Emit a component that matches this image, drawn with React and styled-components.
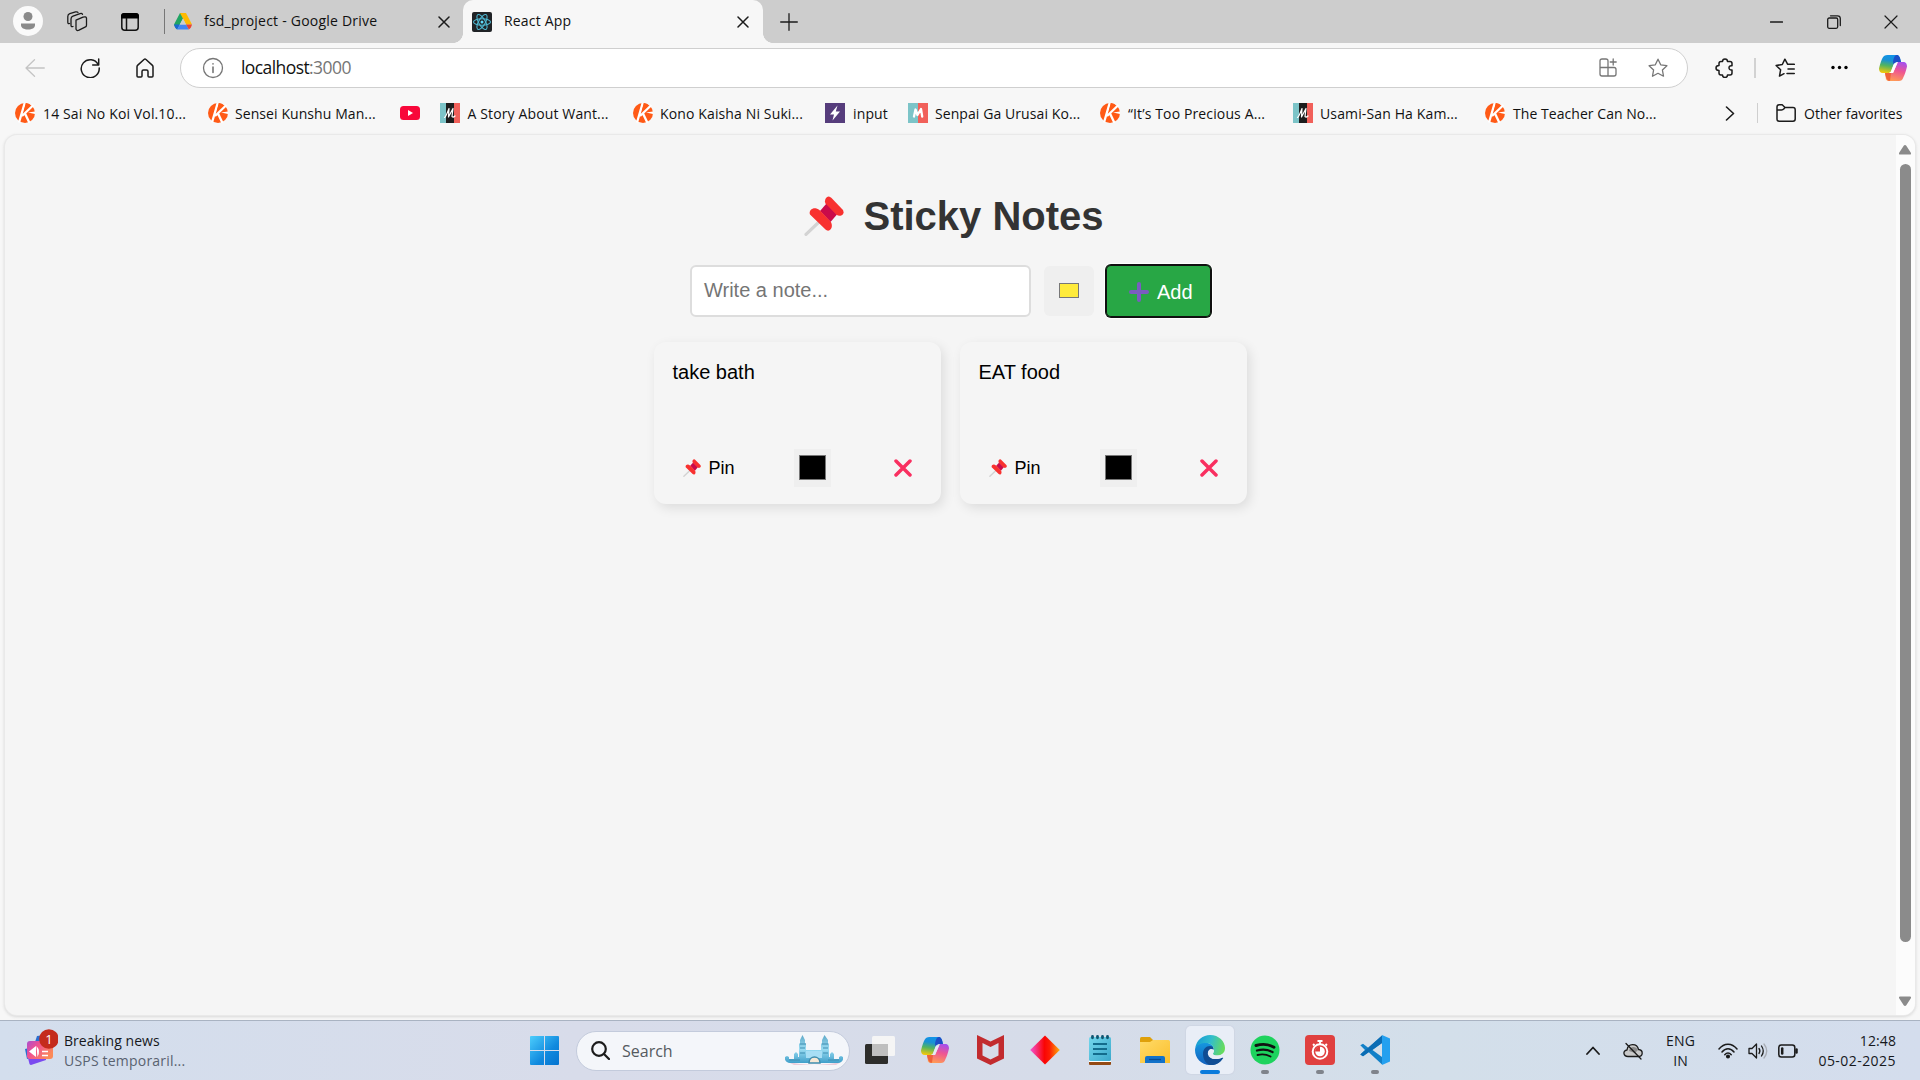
import React from "react";
import styled, { createGlobalStyle } from "styled-components";

const Global = createGlobalStyle`
  * { box-sizing: border-box; }
  body { margin: 0; background: #f7f7f7; overflow: hidden; }
  svg { display: block; flex: none; }
`;

const ui = `"Open Sans", "Noto Sans", sans-serif`;
const arial = `"Liberation Sans", Arial, sans-serif`;

const Screen = styled.div`
  width: 1920px;
  height: 1080px;
  display: flex;
  flex-direction: column;
  background: #f7f7f7;
  font-family: ${ui};
  color: #111;
  overflow: hidden;
`;

/* Fixed-width cell that starts its content at the left edge */
const Cell = styled.div`
  width: ${(p) => p.$w}px;
  flex: none;
  display: flex;
  align-items: center;
`;

const Label = styled.span`
  font-size: ${(p) => p.$size || 14}px;
  letter-spacing: ${(p) => p.$track || 0}px;
  line-height: 20px;
  white-space: nowrap;
`;

const Grow = styled.div`
  flex: 1;
`;

const Rule = styled.div`
  width: ${(p) => p.$w || 1}px;
  height: ${(p) => p.$h}px;
  background: ${(p) => p.$c};
  flex: none;
`;

/* ---------- tab strip ---------- */
const TabStrip = styled.div`
  height: 43px;
  flex: none;
  display: flex;
  background: #cdcdcd;
`;

const StripStart = styled.div`
  width: 164px;
  padding-left: 13px;
  display: flex;
  align-items: center;
`;

const Avatar = styled.div`
  width: 30px;
  height: 30px;
  margin: 0 24px 1px 0;
  border-radius: 50%;
  background: #fafafa;
  display: flex;
  align-items: center;
  justify-content: center;
`;

const Tab = styled.div`
  width: ${(p) => p.$w}px;
  display: flex;
  align-items: center;
  padding: 0 ${(p) => (p.$active ? 14 : 13)}px 0 9px;
  position: relative;
  ${(p) =>
    p.$active &&
    `
    background: #f7f7f7;
    border-radius: 10px 10px 0 0;
    &::before, &::after {
      content: "";
      position: absolute;
      bottom: 0;
      width: 10px;
      height: 10px;
    }
    &::before { left: -10px; background: radial-gradient(circle at 0 0, #cdcdcd 9.6px, #f7f7f7 10.2px); }
    &::after { right: -10px; background: radial-gradient(circle at 100% 0, #cdcdcd 9.6px, #f7f7f7 10.2px); }
  `}
`;

const TabTitle = styled(Label)`
  flex: 1;
  margin: 0 0 2px 12px;
`;

const WindowButtons = styled.div`
  display: flex;
  gap: 43.5px;
  align-items: center;
  padding-right: 22px;
`;

/* ---------- toolbar ---------- */
const Toolbar = styled.div`
  height: 49px;
  flex: none;
  display: flex;
  align-items: center;
  padding-left: 25px;
`;

const Address = styled.div`
  width: 1508px;
  height: 40px;
  border: 1px solid #cfcfcf;
  border-radius: 20px;
  background: #fff;
  display: flex;
  align-items: center;
  padding: 0 19px 0 21px;
`;

const Url = styled.span`
  margin: 0 0 1px 17px;
  font-size: 17.5px;
  letter-spacing: -0.58px;
  line-height: 24px;
  flex: 1;
  span { color: #767676; }
`;

const ToolbarEnd = styled.div`
  flex: 1;
  display: flex;
  align-items: center;
  padding-left: 27px;
`;

/* ---------- favourites ---------- */
const Favorites = styled.div`
  height: 43px;
  flex: none;
  display: flex;
  align-items: center;
  padding: 0 0 1px 15px;
`;

const Favorite = styled(Cell)`
  gap: ${(p) => p.$gap || 8}px;
  ${Label} { padding-top: ${(p) => (p.$low ? 2 : 1)}px; }
`;

const MangaTile = styled.div`
  width: 20px;
  height: 20px;
  flex: none;
  background: ${(p) =>
    p.$dark
      ? "linear-gradient(90deg,#7cc4c8 0 6px,#1d1d1d 6px 14px,#f1605a 14px)"
      : "linear-gradient(90deg,#7cc4c8 0 10px,#f1605a 10px)"};
`;

/* ---------- page ---------- */
const Page = styled.main`
  height: 880px;
  flex: none;
  margin: 0 5px;
  display: flex;
  background: #f5f5f5;
  border-radius: 12px;
  overflow: hidden;
  box-shadow: 0 0 0 1px #e9e9e9, 0 1px 3px 1px #d8d8d8;
`;

const Content = styled.div`
  flex: 1;
  display: flex;
  flex-direction: column;
  align-items: center;
  font-family: ${arial};
`;

const Heading = styled.h1`
  margin: 57px 0 0;
  width: 303px;
  padding-left: 5px;
  display: flex;
  align-items: center;
  gap: 19.5px;
  font-size: 40px;
  line-height: 48px;
  color: #333;
  white-space: nowrap;
`;

const Form = styled.div`
  margin-top: 25px;
  display: flex;
  align-items: center;
  gap: 12.5px;
`;

const NoteInput = styled.div`
  width: 341px;
  height: 52px;
  border: 2px solid #ddd;
  border-radius: 6px;
  background: #fff;
  padding: 0 12px 1px;
  display: flex;
  align-items: center;
  font-size: 20px;
  color: #757575;
`;

const ColorField = styled.div`
  width: ${(p) => p.$w}px;
  height: ${(p) => p.$h}px;
  border-radius: ${(p) => p.$r || 0}px;
  background: #efefef;
  display: flex;
  align-items: center;
  justify-content: center;
`;

const Swatch = styled.div`
  width: ${(p) => p.$w}px;
  height: ${(p) => p.$h}px;
  margin-bottom: 1px;
  border: 1px solid #777;
  background: ${(p) => p.$c};
`;

const AddButton = styled.button`
  width: 105px;
  height: 52px;
  padding: 2px 0 0 23px;
  border: 0;
  border-radius: 5px;
  background: #28a745;
  box-shadow: 0 0 0 1px #101010, inset 0 0 0 1px #101010, 0 0 0 2px #fff;
  display: flex;
  align-items: center;
  gap: 8px;
  color: #fff;
  font: 20px ${arial};
`;

const Notes = styled.div`
  margin-top: 25px;
  display: flex;
  gap: 19px;
`;

const Note = styled.article`
  width: 287px;
  height: 162px;
  padding: 18px 19px 17px 18.5px;
  border-radius: 12px;
  background: #f5f5f5;
  box-shadow: 3px 4px 12px rgba(0, 0, 0, 0.1);
  display: flex;
  flex-direction: column;
  justify-content: space-between;
  font-size: 20px;
  line-height: 24px;
  color: #000;
`;

const NoteActions = styled.div`
  display: flex;
  align-items: center;
  justify-content: space-between;
  padding: 0 10px;
`;

const PinButton = styled.div`
  width: 48px;
  display: flex;
  align-items: center;
  gap: 8px;
  font-size: 18px;
  line-height: 20px;
`;

const ScrollBar = styled.div`
  width: 19px;
  background: #fcfcfc;
  display: flex;
  flex-direction: column;
  align-items: center;
  padding: 10px 1px 9px 0;
`;

const Thumb = styled.div`
  width: 11px;
  height: 778px;
  margin-top: 9px;
  border-radius: 6px;
  background: #8b8b8b;
`;

/* ---------- taskbar ---------- */
const Taskbar = styled.footer`
  height: 60px;
  margin-top: auto;
  flex: none;
  display: flex;
  align-items: center;
  border-top: 1px solid #a9b3c2;
  background: linear-gradient(90deg, #d3deed 0, #d8dcea 30%, #d6dce9 55%, #d3dfea 75%, #d4dded 100%);
`;

const Widget = styled.div`
  width: 530px;
  padding-left: 25px;
  display: flex;
  align-items: center;
  gap: 6px;
  > svg { margin-bottom: 6px; }
`;

const Lines = styled.div`
  display: flex;
  flex-direction: column;
  align-items: ${(p) => p.$align || "flex-start"};
  color: #16181c;
  em { display: flex; font-style: normal; color: #596270; }
`;

const SearchBox = styled.div`
  width: 274px;
  height: 40px;
  margin: 0 1px 0 17px;
  padding: 0 6px 0 14px;
  border: 1px solid #c3cbdc;
  border-radius: 20px;
  background: #f4f6fa;
  display: flex;
  align-items: center;
  color: #555a60;
`;

const SearchText = styled(Label)`
  flex: 1;
  margin-left: 12px;
`;

const Apps = styled.div`
  display: flex;
  margin: 0 0 1px 5px;
  gap: 7px;
`;

const AppTile = styled.div`
  width: 48px;
  height: 48px;
  padding-top: 9px;
  border-radius: 5px;
  display: flex;
  flex-direction: column;
  align-items: center;
  justify-content: space-between;
  ${(p) => p.$active && "background: #e9eef7; box-shadow: 0 0 1px 1px #cfd6e4;"}
`;

const AppIcon = styled.div`
  height: 30px;
  display: flex;
  align-items: center;
`;

const Indicator = styled.div`
  width: ${(p) => (p.$active ? 20 : 8)}px;
  height: 4px;
  border-radius: 2px;
  background: ${(p) => (p.$show ? (p.$active ? "#0a7bdc" : "#7f838b") : "transparent")};
`;

const Tray = styled.div`
  display: flex;
  align-items: center;
  padding-right: 24px;
`;

/* ---------- drawings ---------- */
const Svg = ({ w, h, children, sw = 1.3, color = "#1b1b1b" }) => (
  <svg width={w} height={h} viewBox={`0 0 ${w} ${h}`} fill="none" stroke={color} strokeWidth={sw} strokeLinecap="round" strokeLinejoin="round">
    {children}
  </svg>
);

const Cross = ({ s = 12, sw = 1.5 }) => (
  <Svg w={s} h={s} sw={sw}><path d={`M1 1L${s - 1} ${s - 1}M${s - 1} 1L1 ${s - 1}`} /></Svg>
);

const PushPin = ({ size }) => (
  <svg width={size} height={size} viewBox="0 0 40 40" strokeLinecap="round" strokeLinejoin="round">
    <path d="M2 38.300L16 25" stroke="#d3d3d3" strokeWidth="3.200" />
    <path d="M16 15L22.500 7.500L33 18.500L26.500 26Z" fill="#ca0b4a" />
    <path d="M6 18.500C4.500 14.500 8.500 11.500 12.500 12.500C14 13 15.500 14 16.500 15L26.500 25.500C28.500 28 28.500 32.500 25.500 34.300C24 35 22.500 34.500 21.500 33.500Z" fill="#f8312f" />
    <path d="M21.500 7.500C20 4.500 22 .5 24.500 .5C26 .5 27 1.500 28 2.500L38.500 13.500C40.500 16 39.500 19 36.500 19.700C35 19.900 33.500 19.500 32.500 18.700Z" fill="#f8312f" />
  </svg>
);

const Plus = () => (
  <Svg w={20} h={20} sw={4} color="#7a5cc0"><path d="M10 2v16M2 10h16" /></Svg>
);

const KIcon = () => (
  <svg width="20" height="20" viewBox="0 0 20 20">
    <circle cx="10" cy="10" r="10" fill="#ff5a16" />
    <path d="M9.700 0L4 19.500M18.500 2L7 13M10 10.500L14.500 20" stroke="#fff" strokeWidth="2.300" fill="none" />
    <path d="M11 0L9 7.500L15 1.500Z" fill="#ff5a16" />
    <path d="M13 9.500L20 8.500V11Z" fill="#fff" />
  </svg>
);

const MangaIcon = ({ dark }) => (
  <MangaTile $dark={dark}>
    <Svg w={20} h={20} color="#fff" sw={dark ? 1.2 : 2.3}>
      {dark ? <path d="M4.500 14.500C6 14 8 8 9 5.500L8.500 14L13 5.500L12 13.500C13 14.500 14 14 15 13" /> : <path d="M6 13.500L7.500 6.500L9.500 12L13 6L14.200 13.500" />}
    </Svg>
  </MangaTile>
);

const YouTube = () => (
  <svg width="20" height="14" viewBox="0 0 20 14"><rect width="20" height="14" rx="3.500" fill="#f8073a" /><path d="M8 4v6l5-3z" fill="#fff" /></svg>
);

const Bolt = () => (
  <svg width="20" height="20"><rect width="20" height="20" fill="#563d7c" /><path d="M12.500 2.500L5 11.500h4L7.500 17.500L15 8.500h-4.200z" fill="#fff" /></svg>
);

const Drive = () => (
  <svg width="18" height="17" viewBox="0 0 18 17">
    <path d="M6 0h6L9 5.500L3.100 16.500C1.500 15 0 12 0 11.500z" fill="#1fa463" />
    <path d="M6 0h6l6 11.500h-6z" fill="#ffba00" />
    <path d="M0 11.500h5.800L3.100 16.500C1.500 15.500.5 13.500 0 11.500z" fill="#1967d2" />
    <path d="M5.800 11.500h6.400l2.700 5H3.100z" fill="#4285f4" />
    <path d="M12 11.500h6c-.5 2-1.500 4-3.100 5z" fill="#ea4335" />
    <path d="M9 5.500l3 6H5.800z" fill="#cdcdcd" />
  </svg>
);

const ReactIcon = () => (
  <svg width="20" height="20" viewBox="0 0 20 20" fill="none" stroke="#4fb9d3" strokeWidth="1.100">
    <rect width="20" height="20" rx="2" fill="#202326" stroke="none" />
    {[0, 60, 120].map((a) => <ellipse key={a} cx="10" cy="10" rx="8.500" ry="3.300" transform={`rotate(${a} 10 10)`} />)}
    <circle cx="10" cy="10" r="1.500" fill="#61dafb" stroke="none" />
  </svg>
);

const Copilot = ({ id, bg = "#fff" }) => (
  <svg width="28" height="26" viewBox="0 0 28 26">
    <defs>
      <linearGradient id={`${id}a`} x1=".5" y1="0" x2=".3" y2="1">
        <stop offset="0" stopColor="#1193e8" /><stop offset=".3" stopColor="#1991d4" /><stop offset=".6" stopColor="#52b45f" /><stop offset="1" stopColor="#f4c80a" />
      </linearGradient>
      <linearGradient id={`${id}b`} x1=".7" y1="0" x2=".4" y2="1">
        <stop offset="0" stopColor="#a550ed" /><stop offset=".45" stopColor="#ee5593" /><stop offset="1" stopColor="#ff9b55" />
      </linearGradient>
    </defs>
    <path d="M7 26C7 22 6 20 6 18h8l5-11h5c3 0 4 2 4 4.500-1 4.500-2.500 8.500-3.500 10.500-1 3-2.500 4-4.500 4H10c-1.500 0-2.500-.5-3-2z" fill={`url(#${id}b)`} />
    <path d="M6 18h6l-1 7.800C8 26 7 23 6 18z" fill="#ef6238" />
    <path d="M8.500 0H18c2 0 3 2 4 7h-4c-2 0-3 1-4 4l-2 5c-.6 1.500-1.500 2-3 2H4C1 18 0 16 0 13.500 1 9 2.500 5 3.500 3 4.500 1 6 0 8.500 0z" fill={`url(#${id}a)`} />
    <path d="M14 6.500C15 2 16 0 18 0c2 0 3 2 4 7h-3c-2.500 0-3 .5-4.500 3z" fill="#1c4fc7" />
    <path d="M15 8.500h3L14 18h-4c1.500-.5 2-1 2.500-2.500z" fill={bg} />
  </svg>
);

const McAfee = () => (
  <svg width="27" height="30"><path fillRule="evenodd" d="M0 0l13.500 6.500L27 0v23.500L13.500 30 0 23.500zM5.500 8v12.500l8 4 8-4V8l-8 4z" fill="#c22b2e" /></svg>
);

const Diamond = () => (
  <svg width="30" height="30">
    <defs><linearGradient id="dia"><stop offset="0" stopColor="#f453d5" /><stop offset=".48" stopColor="#fa0505" /><stop offset=".65" stopColor="#fd1b05" /><stop offset="1" stopColor="#ffae0a" /></linearGradient></defs>
    <path d="M15 0.500L29.800 15 15 29.500.2 15z" fill="url(#dia)" />
  </svg>
);

const Notepad = () => (
  <svg width="22" height="30">
    <defs><linearGradient id="np" x2="1" y2="1"><stop stopColor="#74d7ec" /><stop offset="1" stopColor="#3ba8cb" /></linearGradient></defs>
    <rect y="24" width="22" height="6" rx="1" fill="#934a14" /><rect y="24" width="22" height="3" fill="#fff" />
    <rect y="2" width="22" height="24" rx="1.500" fill="url(#np)" />
    <path d="M4 9h14M4 14h14M4 19h14" stroke="#136c8c" strokeWidth="1.800" />
    <path d="M3.500 1.500v1.300M8.500 1.500v1.300M13.500 1.500v1.300M18.500 1.500v1.300" stroke="#0f5671" strokeWidth="2.800" strokeLinecap="round" />
  </svg>
);

const Explorer = () => (
  <svg width="30" height="26">
    <defs><linearGradient id="fo" x2="1" y2="1"><stop stopColor="#ffda68" /><stop offset="1" stopColor="#fbc02d" /></linearGradient></defs>
    <path d="M0 1.500Q0 0 1.500 0H10l3 3v5H0z" fill="#dfa00a" />
    <path d="M0 5h10l3-2h15.500q1.500 0 1.500 1.500V26H0z" fill="url(#fo)" />
    <path d="M5 26v-5q0-2 2-2h16q2 0 2 2v5z" fill="#1272c9" /><path d="M9 22.500h12" stroke="#084b91" strokeWidth="1.300" />
  </svg>
);

const Edge = () => (
  <svg width="30" height="30" viewBox="0 0 30 30">
    <defs>
      <linearGradient id="eg" x1="0" y1=".3" x2="1" y2=".5"><stop stopColor="#159bd6" /><stop offset=".5" stopColor="#32bdcc" /><stop offset="1" stopColor="#68dc5a" /></linearGradient>
      <linearGradient id="eb" x2="0" y2="1"><stop stopColor="#1698e0" /><stop offset="1" stopColor="#1260bd" /></linearGradient>
    </defs>
    <path d="M0 15C0 9 7 6 13 8c6 2 6 5 5 7-3-3-7-1-7 4 0 7 8 10 16 5-2 4-7 6-12 6C6 30 0 23 0 15z" fill="url(#eb)" />
    <path d="M8 19c0-5 3-8 7-8 3 0 4 2 3.500 4-2.500-2-6.500 0-5.500 4.500C14 24 20 25.500 27.500 22.500c.7 0 .8.5.5 1C24 29 19 30.500 15 30 11 29 8 24 8 19z" fill="#104d94" />
    <path d="M.2 13C1.500 5 8 0 15 0c9 0 15 6.500 15 13 0 6-5 8-9 7.500-2.500-.3-3.500-1.200-3-2C20.500 14 18 8 11 8 6 8 2 10 .2 13z" fill="url(#eg)" />
    <path d="M13.500 18C13 15 15.500 12.800 18.500 14.500C19.500 16 18.500 17.500 18 18.500C17.800 20 20 20.500 22 20.500C25 20.600 27.500 19.500 29 17.500C28.500 20 28 21.500 27.500 22.500C20 25.500 14 24 13.500 18Z" fill="#e9eef7" />
  </svg>
);

const Spotify = () => (
  <svg width="30" height="30" fill="none" stroke="#111" strokeLinecap="round">
    <circle cx="15" cy="15" r="14.500" fill="#1ed35e" stroke="none" />
    <path d="M6 10.500c6-1.800 13-1.200 18 1.800" strokeWidth="2.900" /><path d="M7 15.500c5-1.500 11-1 15.500 1.600" strokeWidth="2.300" /><path d="M7.500 20c4.500-1.200 9-.7 13 1.500" strokeWidth="1.900" />
  </svg>
);

const Timer = () => (
  <svg width="30" height="30" fill="none" stroke="#fff">
    <rect width="30" height="30" rx="4" fill="#e0403f" stroke="none" />
    <circle cx="15" cy="16.500" r="7.300" strokeWidth="2" /><circle cx="15" cy="16.500" r="4.800" fill="#fff" stroke="none" />
    <path d="M15 16.500V11.500A5 5 0 0 0 10 16.500z" fill="#e0403f" stroke="none" />
    <path d="M12.500 6h5M15 6v3M20.500 9l1.500 1.500M9.500 9L8 10.500" strokeWidth="1.800" />
  </svg>
);

const Code = () => (
  <svg width="30" height="30">
    <path d="M22 0.500L8.500 13 3 8.800.3 10.300 5 15 .3 19.500 3 21.200 8.500 17 22 29.500V22L12.500 15 22 8z" fill="#1180c8" />
    <path d="M.3 19.500L3 21.200 22 8V.5z" fill="#0a6cb4" />
    <path d="M22 0l8 3.500v23L22 30z" fill="#24a0ef" />
  </svg>
);

const Windows = () => (
  <svg width="29" height="29">
    <defs><linearGradient id="wi" x2="1" y2="1"><stop stopColor="#4ccdfc" /><stop offset=".6" stopColor="#1089de" /><stop offset="1" stopColor="#0573cf" /></linearGradient></defs>
    <path d="M1 0h13v14H0V1q0-1 1-1zM15 0h13q1 0 1 1v13H15zM0 15h14v14H1q-1 0-1-1zM15 15h14v13q0 1-1 1H15z" fill="url(#wi)" />
  </svg>
);

const TaskView = () => (
  <svg width="30" height="28">
    <rect y="8" width="23" height="20" rx="1.500" fill="#2d2d2b" /><rect x="7" width="23" height="20" rx="1.500" fill="#f5f5f5" /><rect x="7" y="8" width="16" height="12" fill="#bfbfbf" />
  </svg>
);

const Castle = () => (
  <svg width="58" height="31" viewBox="0 0 58 31">
    <defs><linearGradient id="ca" x2="0" y2="1"><stop stopColor="#5fa9c8" /><stop offset=".5" stopColor="#9adcf2" /><stop offset="1" stopColor="#3f9fca" /></linearGradient></defs>
    <path d="M3 27q26 6 53 0l-5 3H9z" fill="#e9cdda" />
    <path d="M0 22l2-1 2 1 0 2h5v-5l2-2 2 2v3h1V9l1-1V5l2.500-5 2.500 5v3l1 1v6h15V9l1-1V5l2.500-5L43 5v3l1 1v13h1v-3l2-2 2 2v5h5v-2l2-1 2 1c1 3-2 6-5 6H5c-3 0-6-3-5-6z" fill="url(#ca)" />
    <path d="M21 16h16v7H21z" fill="#a7def5" />
    <path d="M15 9h6M15 13h5M15 18h5M37 9h6M38 13h5M38 18h5M4 25h11M43 25h11" stroke="#3d8db2" strokeWidth="1" />
    <path d="M24 28c0-8 11-8 11 0z" fill="#f4e8d6" stroke="#3e8cad" strokeWidth="1.500" />
  </svg>
);

const News = () => (
  <svg width="33" height="37" viewBox="0 0 33 37">
    <defs><linearGradient id="ne" x2="1" y2=".6"><stop stopColor="#a94fd0" /><stop offset=".4" stopColor="#f04f92" /><stop offset="1" stopColor="#fb8a58" /></linearGradient></defs>
    <path d="M12 7l8-1v10H9zM0 20l4-1 2 10-4 1z" fill="#2a6fd0" /><path d="M3 29h18v2L6 36q-1 0-1.500-1z" fill="#7a4af0" />
    <rect x="2" y="12" width="26" height="18" rx="3" fill="url(#ne)" />
    <path d="M4 22.500l7-5.500v11zM11.500 17q4.500 5 1 11z" fill="#fff" /><path d="M17 22.500h6M17 26.500h6" stroke="#fff" strokeWidth="1.500" />
    <circle cx="23.900" cy="10" r="9.800" fill="#c42b1c" />
    <text x="24" y="14.600" textAnchor="middle" fontFamily="Open Sans, sans-serif" fontSize="13" fill="#fff">1</text>
  </svg>
);

const starPath = "M10 1.200l2.700 5.600 6.200.9-4.500 4.300 1.100 6.200L10 15.300l-5.500 2.900 1.100-6.200L1.100 7.700l6.200-.9z";

const favorites = [
  { icon: <KIcon />, text: "14 Sai No Koi Vol.10...", w: 193, gap: 8, low: true },
  { icon: <KIcon />, text: "Sensei Kunshu Man...", w: 192, gap: 7, low: true, track: 0.08 },
  { icon: <YouTube />, w: 40 },
  { icon: <MangaIcon dark />, text: "A Story About Want...", w: 193, gap: 7.500 },
  { icon: <KIcon />, text: "Kono Kaisha Ni Suki...", w: 192, gap: 7, low: true },
  { icon: <Bolt />, text: "input", w: 83, gap: 8, low: true },
  { icon: <MangaIcon />, text: "Senpai Ga Urusai Ko...", w: 192, gap: 7, track: 0.08 },
  { icon: <KIcon />, text: "“It’s Too Precious A...", w: 193, gap: 8, low: true },
  { icon: <MangaIcon dark />, text: "Usami-San Ha Kam...", w: 192, gap: 7 },
  { icon: <KIcon />, text: "The Teacher Can No...", w: 240, gap: 8, track: 0.05 },
];

const apps = [
  { icon: <TaskView /> },
  { icon: <Copilot id="t" bg="#e6eaf3" /> },
  { icon: <McAfee /> },
  { icon: <Diamond /> },
  { icon: <Notepad /> },
  { icon: <Explorer /> },
  { icon: <Edge />, open: true, active: true },
  { icon: <Spotify />, open: true },
  { icon: <Timer />, open: true },
  { icon: <Code />, open: true },
];

function BrowserTabs() {
  return (
    <TabStrip>
      <StripStart>
        <Avatar><svg width="14" height="18"><circle cx="7" cy="4.500" r="4.500" fill="#8a8a8a" /><path d="M0 11.500h14v1.500c0 3-3 4.500-7 4.500s-7-1.500-7-4.500z" fill="#8a8a8a" /></svg></Avatar>
        <Cell $w={54}>
          <Svg w={21} h={21}>
            <path d="M9 9.200l7-3 q3-1 3.500 1v7q0 1.500-1.500 2l-6 3q-2.500 1-3-1v-7q0-1.500 0-2zM6 15.500c-1.500.5-2 0-2-1.500V8q0-2 2-2.800l7-2.600q2-.6 2.500.8M2.500 12.500C1 13 .8 12 .8 11V5.500q0-2 2-2.800L8.500.9q2-.4 2.500.6" />
          </Svg>
        </Cell>
        <svg width="18" height="18"><rect x=".8" y=".8" width="16.400" height="16.400" rx="3" fill="none" stroke="#111" strokeWidth="1.500" /><path d="M0 5.500V3q0-3 3-3h12q3 0 3 3v2.500z" fill="#000" /><path d="M5.500 5v12.500" stroke="#111" strokeWidth="1.500" /></svg>
      </StripStart>
      <Cell $w={1}><Rule $h={25} $c="#777" /></Cell>
      <Tab $w={298}>
        <Drive />
        <TabTitle $track={0.22}>fsd_project - Google Drive</TabTitle>
        <Cross />
      </Tab>
      <Tab $w={300} $active>
        <ReactIcon />
        <TabTitle $track={0.18}>React App</TabTitle>
        <Cross />
      </Tab>
      <Cell $w={60}><Grow /><Svg w={18} h={18}><path d="M9 .7v16.600M.7 9h16.600" /></Svg><Cell $w={25} /></Cell>
      <Grow />
      <WindowButtons>
        <Svg w={13} h={14}><path d="M.5 7h12" /></Svg>
        <Svg w={14} h={14}><rect x=".7" y="3" width="10" height="10.300" rx="1.500" /><path d="M3.500.8h7q2.800 0 2.800 2.800v7" /></Svg>
        <Cross s={14} sw={1.2} />
      </WindowButtons>
    </TabStrip>
  );
}

function NavigationBar() {
  return (
    <Toolbar>
      <Cell $w={55}><Svg w={20} h={18} color="#c4c4c4"><path d="M19.300 9H1M9.500.8L1 9l8.500 8.200" /></Svg></Cell>
      <Cell $w={56}><Svg w={20} h={20} sw={1.5}><path d="M18.200 6.500A9 9 0 1 0 19.200 10M18.700 1v6h-6" /></Svg></Cell>
      <Cell $w={44}><Svg w={18} h={20} sw={1.5}><path d="M1 8.800q0-1 .8-1.700L8 1.500q1-.8 2 0l6.200 5.600q.8.700.8 1.700V18q0 1-1 1h-3q-1 0-1-1v-4.500q0-1.500-1.500-1.500h-3Q6 12 6 13.500V18q0 1-1 1H2q-1 0-1-1z" /></Svg></Cell>
      <Address>
        <Svg w={22} h={22} color="#767676"><circle cx="11" cy="11" r="9.500" /><path d="M11 10v5.500M11 6.700v.3" strokeWidth="1.600" /></Svg>
        <Url>localhost<span>:3000</span></Url>
        <Cell $w={49}><Svg w={18} h={19} color="#767676"><path d="M9 9.500V3q0-2-2-2H3Q1 1 1 3v13q0 2 2 2h12q2 0 2-2v-4.500q0-2-2-2zM1 9.500h8V18M14.200 1v6M11.200 4h6" /></Svg></Cell>
        <Svg w={20} h={20} color="#767676"><path d={starPath} /></Svg>
      </Address>
      <ToolbarEnd>
        <Cell $w={39}><Svg w={19} h={20} sw={1.5}><path d="M4 5.500q0-2 2-2h1.500c0-3.500 5-3.500 5 0H15q2 0 2 2v2.300c-4-1-4 5 0 4.200V15q0 2-2 2h-2.500c0 3.300-5 3.300-5 0H6q-2 0-2-2v-2.500c-4 0-4-5 0-5z" /></Svg></Cell>
        <Cell $w={21}><Rule $w={2} $h={20} $c="#d2d2d2" /></Cell>
        <Cell $w={56}><Svg w={20} h={20} sw={1.5}><path d="M12.500 6.300h6.800M13 11h6.300M12 15.500h7.300M12.300 5.700L9.900 1.200 7.300 6.500l-6.200 1 4.500 4.300-1.100 6.300 4.500-2.400" /></Svg></Cell>
        <Cell $w={48}><svg width="17" height="5"><circle cx="2" cy="2.500" r="1.700" /><circle cx="8.500" cy="2.500" r="1.700" /><circle cx="15" cy="2.500" r="1.700" /></svg></Cell>
        <Copilot id="n" />
      </ToolbarEnd>
    </Toolbar>
  );
}

function FavoritesBar() {
  return (
    <Favorites>
      {favorites.map((f, i) => (
        <Favorite key={i} $w={f.w} $gap={f.gap} $low={f.low}>
          {f.icon}
          {f.text && <Label $track={f.track || 0.13}>{f.text}</Label>}
        </Favorite>
      ))}
      <Cell $w={32}><Svg w={10} h={15} sw={1.6}><path d="M1.500 1L8.500 7.500 1.500 14" /></Svg></Cell>
      <Cell $w={19}><Rule $h={20} $c="#cfcfcf" /></Cell>
      <Favorite $w={140} $gap={8}>
        <Svg w={20} h={18} sw={1.5}><path d="M1 5V3q0-2.200 2.200-2.200h3L9 3.500h8q2.200 0 2.200 2.200V15q0 2.200-2.200 2.200H3.200Q1 17.200 1 15zM1 6h4.500q1.500 0 2-.8L9 3.500" /></Svg>
        <Label>Other favorites</Label>
      </Favorite>
    </Favorites>
  );
}

function StickyNote({ text }) {
  return (
    <Note>
      <div>{text}</div>
      <NoteActions>
        <PinButton><PushPin size={18} />Pin</PinButton>
        <ColorField $w={37} $h={38}><Swatch $w={27} $h={25} $c="#000" /></ColorField>
        <Svg w={18} h={18} sw={3.5} color="#f92f60"><path d="M2 2l14 14M16 2L2 16" /></Svg>
      </NoteActions>
    </Note>
  );
}

function NotesPage() {
  return (
    <Page>
      <Content>
        <Heading><PushPin size={40} />Sticky Notes</Heading>
        <Form>
          <NoteInput>Write a note...</NoteInput>
          <ColorField $w={50} $h={50} $r={6}><Swatch $w={20} $h={15} $c="#ffeb3b" /></ColorField>
          <AddButton><Plus />Add</AddButton>
        </Form>
        <Notes>
          <StickyNote text="take bath" />
          <StickyNote text="EAT food" />
        </Notes>
      </Content>
      <ScrollBar>
        <svg width="12" height="10"><path d="M6 0q.8 0 1.300.8L12 8q.3 1.500-1 1.500H1Q-.3 9.500 0 8L4.700.8Q5.200 0 6 0z" fill="#8b8b8b" /></svg>
        <Thumb />
        <Grow />
        <svg width="12" height="10"><path d="M6 10q.8 0 1.300-.8L12 2Q12.300.5 11 .5H1Q-.3.5 0 2l4.700 7.200Q5.200 10 6 10z" fill="#8b8b8b" /></svg>
      </ScrollBar>
    </Page>
  );
}

function SystemTaskbar() {
  return (
    <Taskbar>
      <Widget>
        <News />
        <Lines><Label $track={0.05}>Breaking news</Label><em><Label $track={0.2}>USPS temporaril...</Label></em></Lines>
      </Widget>
      <Windows />
      <SearchBox>
        <Svg w={19} h={19} sw={2.2}><circle cx="8" cy="8" r="6.800" /><path d="M13 13l5 5" /></Svg>
        <SearchText $size={16}>Search</SearchText>
        <Castle />
      </SearchBox>
      <Apps>
        {apps.map((a, i) => (
          <AppTile key={i} $active={a.active}>
            <AppIcon>{a.icon}</AppIcon>
            <Indicator $show={a.open} $active={a.active} />
          </AppTile>
        ))}
      </Apps>
      <Grow />
      <Tray>
        <Cell $w={37}><Svg w={14} h={9} sw={1.8}><path d="M1 8l6-6.500L13 8" /></Svg></Cell>
        <Cell $w={43}><Svg w={20} h={18}><path d="M5 14.500C0 14.500-.5 8.500 4 8 5 1 14 1 15.500 7.500c5 .5 5 7-.5 7z" fill="#c9c9c9" /><path d="M6 9C7 4 13 4 15 8l-3 3z" fill="#8a8a8a" stroke="none" /><path d="M3 1.500L18 17" /></Svg></Cell>
        <Cell $w={52}><Lines $align="center"><Label $track={0.2}>ENG</Label><Label>IN</Label></Lines></Cell>
        <Cell $w={30}><Svg w={20} h={16} sw={1.5}><path d="M1 6c5-6.500 13-6.500 18 0M4 9c3.500-4.500 8.500-4.500 12 0M6.800 11.800c2-2.300 4.400-2.300 6.400 0" /><circle cx="10" cy="13.500" r="1.300" fill="#111" /></Svg></Cell>
        <Cell $w={30}><Svg w={20} h={16}><path d="M1 5.500h3L8.500 1v14L4 10.500H1zM11 5.500q1.800 2.500 0 5M13.500 3q3.500 5 0 10" /><path d="M16 1q5.500 7 0 14" stroke="#a9adb5" /></Svg></Cell>
        <Cell $w={40}><Svg w={20} h={14} sw={1.5}><rect x=".8" y="1" width="16" height="12" rx="2.500" /><path d="M4.200 4.500v5" strokeWidth="2.500" /><path d="M18.500 5.500v3" strokeWidth="2.500" /></Svg></Cell>
        <Cell $w={78}><Grow /><Lines $align="flex-end"><Label $track={0.1}>12:48</Label><Label $track={0.45}>05-02-2025</Label></Lines></Cell>
      </Tray>
    </Taskbar>
  );
}

export default function App() {
  return (
    <Screen>
      <Global />
      <BrowserTabs />
      <NavigationBar />
      <FavoritesBar />
      <NotesPage />
      <SystemTaskbar />
    </Screen>
  );
}
